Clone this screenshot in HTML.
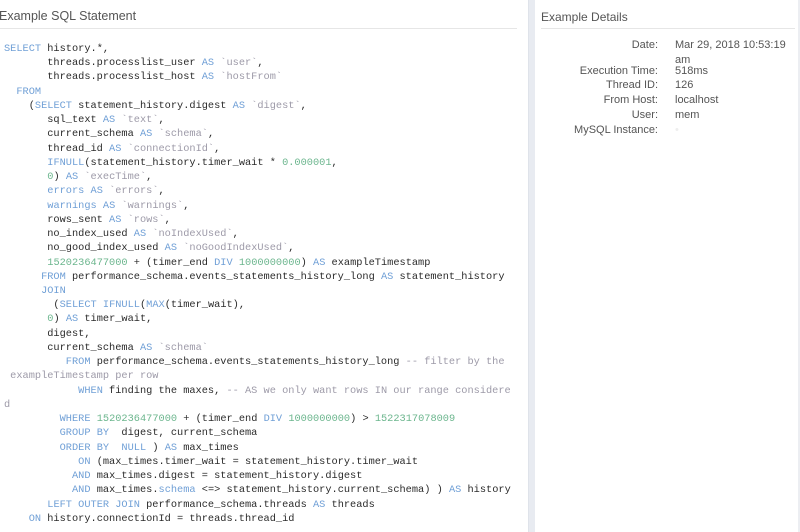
<!DOCTYPE html>
<html><head><meta charset="utf-8"><style>
body{margin:0;width:800px;height:532px;background:#fff;position:relative;overflow:hidden;font-family:"Liberation Sans",sans-serif}
.strip{position:absolute;left:528px;top:0;width:6px;height:532px;background:#e8ebf1;border-left:1px solid #dfe3ea}
.redge{position:absolute;left:798px;top:0;width:2px;height:532px;background:#eceef2}
.t1{position:absolute;left:-1px;top:9px;font-size:12.5px;color:#555}
.l1{position:absolute;left:0;top:28px;width:517px;height:1px;background:#e6e6e6}
.t2{position:absolute;left:541px;top:10px;font-size:12px;color:#555}
.l2{position:absolute;left:541px;top:28px;width:254px;height:1px;background:#e6e6e6}
pre{position:absolute;left:4px;top:42px;margin:0;font-family:"Liberation Mono",monospace;font-size:10.3px;line-height:14.24px;color:#2a2a2a}
.k{color:#6f9fd6}.s{color:#9d9aa8}.n{color:#6cb68e}
.d{position:absolute;font-size:11px;color:#555;line-height:15px}
.lab{left:540px;width:118px;text-align:right}
.val{left:675px}
</style></head><body>
<div class="t1">Example SQL Statement</div><div class="l1"></div>
<div class="strip"></div><div class="redge"></div>
<div class="t2">Example Details</div><div class="l2"></div>
<pre><span class="k">SELECT</span> history.*,
       threads.processlist_user <span class="k">AS</span> <span class="s">`user`</span>,
       threads.processlist_host <span class="k">AS</span> <span class="s">`hostFrom`</span>
  <span class="k">FROM</span>
    (<span class="k">SELECT</span> statement_history.digest <span class="k">AS</span> <span class="s">`digest`</span>,
       sql_text <span class="k">AS</span> <span class="s">`text`</span>,
       current_schema <span class="k">AS</span> <span class="s">`schema`</span>,
       thread_id <span class="k">AS</span> <span class="s">`connectionId`</span>,
       <span class="k">IFNULL</span>(statement_history.timer_wait * <span class="n">0.000001</span>,
       <span class="n">0</span>) <span class="k">AS</span> <span class="s">`execTime`</span>,
       <span class="k">errors</span> <span class="k">AS</span> <span class="s">`errors`</span>,
       <span class="k">warnings</span> <span class="k">AS</span> <span class="s">`warnings`</span>,
       rows_sent <span class="k">AS</span> <span class="s">`rows`</span>,
       no_index_used <span class="k">AS</span> <span class="s">`noIndexUsed`</span>,
       no_good_index_used <span class="k">AS</span> <span class="s">`noGoodIndexUsed`</span>,
       <span class="n">1520236477000</span> + (timer_end <span class="k">DIV</span> <span class="n">1000000000</span>) <span class="k">AS</span> exampleTimestamp
      <span class="k">FROM</span> performance_schema.events_statements_history_long <span class="k">AS</span> statement_history
      <span class="k">JOIN</span>
        (<span class="k">SELECT</span> <span class="k">IFNULL</span>(<span class="k">MAX</span>(timer_wait),
       <span class="n">0</span>) <span class="k">AS</span> timer_wait,
       digest,
       current_schema <span class="k">AS</span> <span class="s">`schema`</span>
          <span class="k">FROM</span> performance_schema.events_statements_history_long <span class="s">-- filter by the</span>
<span class="s"> exampleTimestamp per row</span>
            <span class="k">WHEN</span> finding the maxes, <span class="s">-- AS we only want rows IN our range considere</span>
<span class="s">d</span>
         <span class="k">WHERE</span> <span class="n">1520236477000</span> + (timer_end <span class="k">DIV</span> <span class="n">1000000000</span>) &gt; <span class="n">1522317078009</span>
         <span class="k">GROUP BY</span>  digest, current_schema
         <span class="k">ORDER BY</span>  <span class="k">NULL</span> ) <span class="k">AS</span> max_times
            <span class="k">ON</span> (max_times.timer_wait = statement_history.timer_wait
           <span class="k">AND</span> max_times.digest = statement_history.digest
           <span class="k">AND</span> max_times.<span class="k">schema</span> &lt;=&gt; statement_history.current_schema) ) <span class="k">AS</span> history
       <span class="k">LEFT OUTER JOIN</span> performance_schema.threads <span class="k">AS</span> threads
    <span class="k">ON</span> history.connectionId = threads.thread_id</pre>
<div class="d lab" style="top:38px">Date:</div><div class="d val" style="top:38px">Mar 29, 2018 10:53:19<br>am</div>
<div class="d lab" style="top:64px">Execution Time:</div><div class="d val" style="top:64px">518ms</div>
<div class="d lab" style="top:78px">Thread ID:</div><div class="d val" style="top:78px">126</div>
<div class="d lab" style="top:93px">From Host:</div><div class="d val" style="top:93px">localhost</div>
<div class="d lab" style="top:108px">User:</div><div class="d val" style="top:108px">mem</div>
<div class="d lab" style="top:123px">MySQL Instance:</div><div class="d val" style="top:123px;color:#eee">•</div>
</body></html>
